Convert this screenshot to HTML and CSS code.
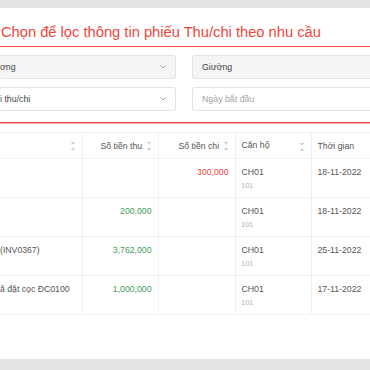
FILE: index.html
```html
<!DOCTYPE html>
<html lang="vi">
  <head>
    <meta charset="UTF-8" />
    <meta name="viewport" content="width=device-width, initial-scale=1.0" />
    <title>Phiếu Thu/chi</title>
    <link rel="stylesheet" href="styles.css">
  </head>

  <body>
    <div class="page">
      <h2 class="filter-title">Chọn để lọc thông tin phiếu Thu/chi theo nhu cầu</h2>

      <div class="filters">
        <div class="field field-select disabled">
          <span>ơng</span>
          <svg class="chevron" width="6" height="4" viewBox="0 0 6 4"><path d="M0.5 0.5 L3 3 L5.5 0.5" fill="none" stroke="#999" stroke-width="0.9" /></svg>
        </div>
        <div class="field disabled"><span>Giường</span></div>
        <div class="field field-select">
          <span>i thu/chi</span>
          <svg class="chevron" width="6" height="4" viewBox="0 0 6 4"><path d="M0.5 0.5 L3 3 L5.5 0.5" fill="none" stroke="#999" stroke-width="0.9" /></svg>
        </div>
        <div class="field"><span class="placeholder">Ngày bắt đầu</span></div>
      </div>

      <table class="receipts">
        <colgroup>
          <col style="width: 82px" />
          <col style="width: 76px" />
          <col style="width: 77px" />
          <col style="width: 76px" />
          <col style="width: 90px" />
        </colgroup>
        <thead>
          <tr>
            <th class="th-end"><span class="sort"></span></th>
            <th class="num">Số tiền thu <span class="sort"></span></th>
            <th class="num">Số tiền chi <span class="sort"></span></th>
            <th class="th-split">Căn hộ <span class="sort"></span></th>
            <th>Thời gian</th>
          </tr>
        </thead>
        <tbody>
          <tr>
            <td class="desc"></td>
            <td class="num"></td>
            <td class="num out">300,000</td>
            <td>CH01<small>101</small></td>
            <td>18-11-2022</td>
          </tr>
          <tr>
            <td class="desc"></td>
            <td class="num in">200,000</td>
            <td class="num"></td>
            <td>CH01<small>101</small></td>
            <td>18-11-2022</td>
          </tr>
          <tr>
            <td class="desc">(INV0367)</td>
            <td class="num in">3,762,000</td>
            <td class="num"></td>
            <td>CH01<small>101</small></td>
            <td>25-11-2022</td>
          </tr>
          <tr>
            <td class="desc">ã đặt cọc ĐC0100</td>
            <td class="num in">1,000,000</td>
            <td class="num"></td>
            <td>CH01<small>101</small></td>
            <td>17-11-2022</td>
          </tr>
        </tbody>
      </table>
    </div>
  </body>
</html>
```

FILE: styles.css
```css
body {
  margin: 0;
  font-family: "Liberation Sans", Arial, sans-serif;
  background: #e4e4e4;
  color: #555;
  overflow: hidden;
}

.page {
  margin-top: 8px;
  height: 351px;
  background: #fff;
  overflow: hidden;
}

/* Title */
.filter-title {
  margin: 0;
  padding: 14px 0 4px 1px;
  font-size: 14.7px;
  line-height: 20px;
  font-weight: 400;
  color: #f0463b;
  border-bottom: 1px solid #f0463b;
}

/* Filters */
.filters {
  display: grid;
  grid-template-columns: 177px 200px;
  column-gap: 16px;
  row-gap: 8px;
  margin-left: -1px;
  padding: 8px 0 11px;
  border-bottom: 1px solid #f0463b;
  box-shadow: 0 1px 0 #f8b6af;
}

.field {
  height: 24px;
  box-sizing: border-box;
  border: 1px solid #e3e3e3;
  border-radius: 3px;
  display: flex;
  align-items: center;
  justify-content: space-between;
  padding: 0 9px;
  font-size: 8.8px;
  color: #444;
  background: #fff;
}

.field-select {
  padding-left: 0;
}

.disabled {
  background: #f5f5f5;
}

.placeholder {
  color: #a6a6a6;
}

/* Table */
.receipts {
  margin-top: 9px;
  border-collapse: collapse;
  table-layout: fixed;
  width: 401px;
  font-size: 8.7px;
  color: #555;
}

.receipts th,
.receipts td {
  border-top: 1px solid #eef0f5;
  border-bottom: 1px solid #eef0f5;
  border-right: 1px solid #eef0f5;
  padding: 0 6px;
  text-align: left;
}

.receipts th {
  height: 26px;
  box-sizing: border-box;
  font-weight: 400;
  vertical-align: middle;
}

.receipts td {
  height: 39px;
  box-sizing: border-box;
  padding-top: 6px;
  line-height: 14px;
  vertical-align: top;
}

.receipts td small {
  display: block;
  font-size: 7px;
  color: #b0b0b0;
}

.receipts .num {
  text-align: right;
}

.receipts .desc {
  padding-left: 0;
}

.th-end {
  text-align: right !important;
}

.th-split .sort {
  float: right;
  margin-top: 3px;
}

.sort {
  display: inline-block;
  width: 5px;
  height: 8px;
  margin-left: 2px;
  vertical-align: -1px;
  background:
    linear-gradient(to top right, transparent 50%, #d0d0d0 50%) 0 0 / 2.5px 3px no-repeat,
    linear-gradient(to top left, transparent 50%, #d0d0d0 50%) 2.5px 0 / 2.5px 3px no-repeat,
    linear-gradient(to bottom right, transparent 50%, #d0d0d0 50%) 0 5px / 2.5px 3px no-repeat,
    linear-gradient(to bottom left, transparent 50%, #d0d0d0 50%) 2.5px 5px / 2.5px 3px no-repeat;
}

.in {
  color: #3f9b5e;
}

.out {
  color: #f2453a;
}
```
